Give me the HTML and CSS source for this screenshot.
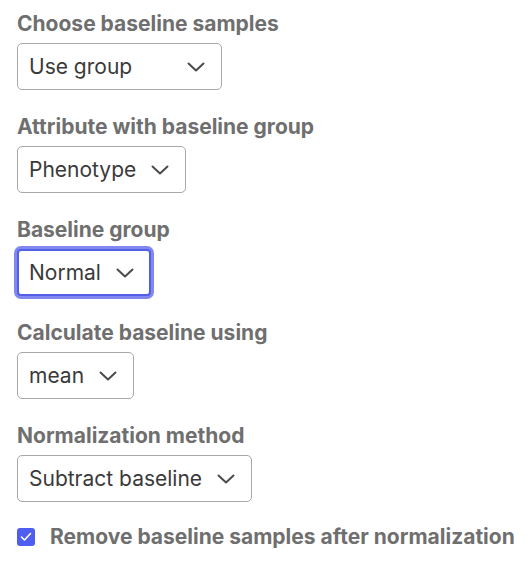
FILE: index.html
```html
<!DOCTYPE html>
<html>
<head>
<meta charset="utf-8">
<link rel="stylesheet" href="styles.css">
</head>
<body>
<div class="form">
  <div class="field">
    <div class="label">Choose baseline samples</div>
    <div class="select w-use">
      <span class="value">Use group</span>
      <svg class="chev" width="18" height="10" viewBox="0 0 18 10"><path d="M1.5 1.5 L9 8.5 L16.5 1.5" fill="none" stroke="#4b4b4b" stroke-width="2" stroke-linecap="round" stroke-linejoin="round"/></svg>
    </div>
  </div>
  <div class="field">
    <div class="label">Attribute with baseline group</div>
    <div class="select">
      <span class="value">Phenotype</span>
      <svg class="chev" width="18" height="10" viewBox="0 0 18 10"><path d="M1.5 1.5 L9 8.5 L16.5 1.5" fill="none" stroke="#4b4b4b" stroke-width="2" stroke-linecap="round" stroke-linejoin="round"/></svg>
    </div>
  </div>
  <div class="field">
    <div class="label">Baseline group</div>
    <div class="select focused">
      <span class="value">Normal</span>
      <svg class="chev" width="18" height="10" viewBox="0 0 18 10"><path d="M1.5 1.5 L9 8.5 L16.5 1.5" fill="none" stroke="#4b4b4b" stroke-width="2" stroke-linecap="round" stroke-linejoin="round"/></svg>
    </div>
  </div>
  <div class="field">
    <div class="label">Calculate baseline using</div>
    <div class="select">
      <span class="value">mean</span>
      <svg class="chev" width="18" height="10" viewBox="0 0 18 10"><path d="M1.5 1.5 L9 8.5 L16.5 1.5" fill="none" stroke="#4b4b4b" stroke-width="2" stroke-linecap="round" stroke-linejoin="round"/></svg>
    </div>
  </div>
  <div class="field">
    <div class="label">Normalization method</div>
    <div class="select">
      <span class="value">Subtract baseline</span>
      <svg class="chev" width="18" height="10" viewBox="0 0 18 10"><path d="M1.5 1.5 L9 8.5 L16.5 1.5" fill="none" stroke="#4b4b4b" stroke-width="2" stroke-linecap="round" stroke-linejoin="round"/></svg>
    </div>
  </div>
  <label class="check">
    <span class="box">
      <svg width="12" height="10" viewBox="0 0 12 10"><path d="M1.5 5 L4.5 8 L10.5 1.5" fill="none" stroke="#fff" stroke-width="1.6" stroke-linecap="round" stroke-linejoin="round"/></svg>
    </span>
    <span class="check-text">Remove baseline samples after normalization</span>
  </label>
</div>
</body>
</html>
```

FILE: styles.css
```css
html, body {
  margin: 0;
  padding: 0;
  background: #ffffff;
}
body {
  font-family: Inter, "Noto Sans", sans-serif;
}
.form {
  padding: 11px 0 0 17px;
  display: flex;
  flex-direction: column;
}
.field {
  display: flex;
  flex-direction: column;
  align-items: flex-start;
  margin-bottom: 24px;
}
.label {
  font-size: 21px;
  font-weight: 700;
  color: #6f6f6f;
  line-height: 26px;
  margin-bottom: 6px;
  white-space: nowrap;
}
.select {
  box-sizing: border-box;
  height: 47px;
  display: inline-flex;
  align-items: center;
  gap: 15px;
  padding: 0 16px 0 11px;
  border: 1px solid #a9a9a9;
  border-radius: 5px;
  font-size: 21px;
  color: #3a3a3a;
  background: #fff;
  white-space: nowrap;
}
.w-use {
  width: 205px;
  justify-content: space-between;
}
.select.focused {
  border: 2px solid #5360e6;
  box-shadow: 0 0 0 3px #8188f2;
  border-radius: 4px;
  padding-left: 10px;
  padding-right: 15px;
}
.chev {
  display: block;
  flex: none;
}
.check {
  display: flex;
  align-items: center;
  gap: 15px;
  margin-top: -2px;
}
.box {
  flex: none;
  width: 18px;
  height: 18px;
  border-radius: 3px;
  background: #4f5df0;
  display: flex;
  align-items: center;
  justify-content: center;
}
.check-text {
  font-size: 21px;
  font-weight: 700;
  color: #6f6f6f;
  line-height: 26px;
  white-space: nowrap;
}
```
